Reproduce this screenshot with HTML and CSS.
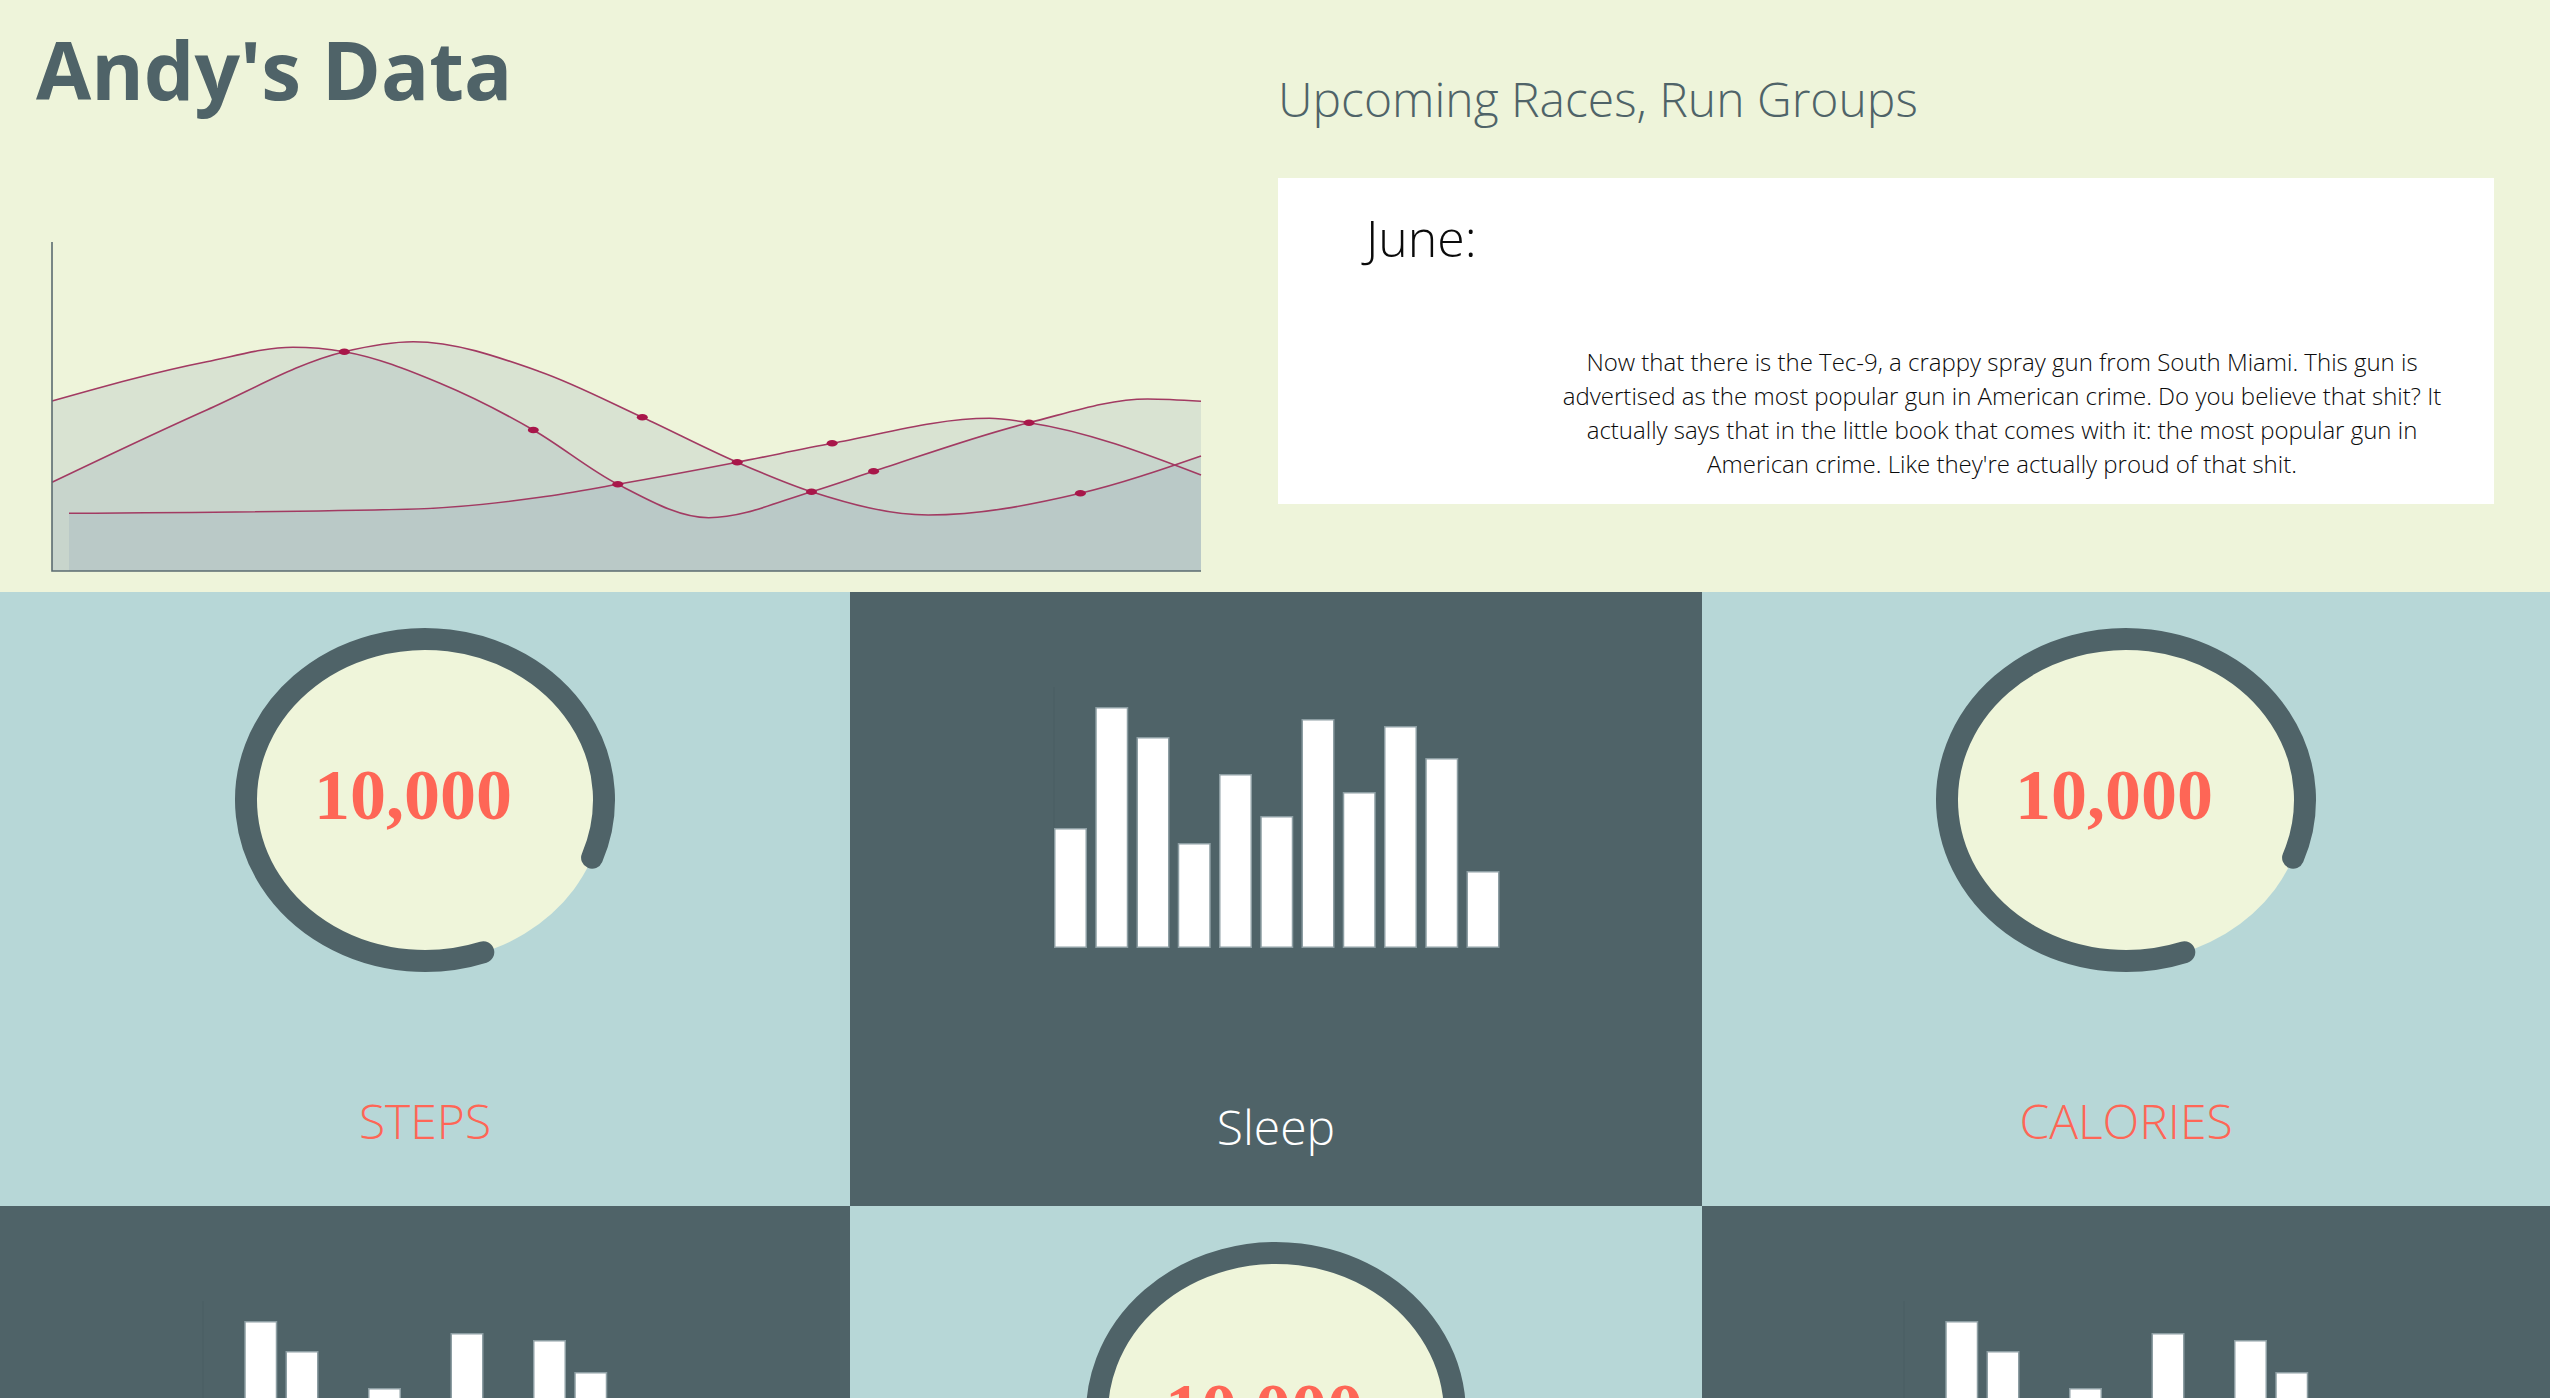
FILE: index.html
```html
<!DOCTYPE html>
<html lang="en">
<head>
  <meta charset="UTF-8" />
  <title>Andy's Data</title>
  <link rel="stylesheet" href="styles.css">
</head>
<body>
  <header id="top">
    <div class="intro">
      <h1>Andy's Data</h1>
      <svg id="trend" width="1180" height="360" viewBox="40 230 1180 360"></svg>
    </div>
    <div class="races">
      <h2>Upcoming Races, Run Groups</h2>
      <div class="month">
        <h3>June:</h3>
        <p>Now that there is the Tec-9, a crappy spray gun from South Miami. This gun is advertised as the most popular gun in American crime. Do you believe that shit? It actually says that in the little book that comes with it: the most popular gun in American crime. Like they're actually proud of that shit.</p>
      </div>
    </div>
  </header>

  <section id="tiles">
    <div class="tile light">
      <svg class="gauge" width="400" height="380" viewBox="0 0 400 380">
        <ellipse class="gauge-face" cx="200" cy="188" rx="179" ry="161" />
        <path class="gauge-arc" d="M258.3 340.2 A179 161 0 1 1 367.1 245.7" />
        <text class="gauge-value" x="188" y="207">10,000</text>
      </svg>
      <div class="label">STEPS</div>
    </div>
    <div class="tile dark">
      <svg class="bars" width="460" height="380" viewBox="0 0 460 380"></svg>
      <div class="label">Sleep</div>
    </div>
    <div class="tile light">
      <svg class="gauge" width="400" height="380" viewBox="0 0 400 380">
        <ellipse class="gauge-face" cx="200" cy="188" rx="179" ry="161" />
        <path class="gauge-arc" d="M258.3 340.2 A179 161 0 1 1 367.1 245.7" />
        <text class="gauge-value" x="188" y="207">10,000</text>
      </svg>
      <div class="label">CALORIES</div>
    </div>

    <div class="tile dark">
      <svg class="bars" width="460" height="380" viewBox="0 0 460 380"></svg>
      <div class="label">Heart Rate</div>
    </div>
    <div class="tile light">
      <svg class="gauge" width="400" height="380" viewBox="0 0 400 380">
        <ellipse class="gauge-face" cx="200" cy="188" rx="179" ry="161" />
        <path class="gauge-arc" d="M258.3 340.2 A179 161 0 1 1 367.1 245.7" />
        <text class="gauge-value" x="188" y="207">10,000</text>
      </svg>
      <div class="label">MILES</div>
    </div>
    <div class="tile dark">
      <svg class="bars" width="460" height="380" viewBox="0 0 460 380"></svg>
      <div class="label">Weight</div>
    </div>
  </section>

  <script>
    const NS = 'http://www.w3.org/2000/svg';

    // three runs, plotted in page pixels (the svg viewBox matches the page)
    const runs = [
      [[52,401],[206.7,361.7],[293,347.3],[344.3,351.7],[440,383.3],[533.3,430],[617.8,484.3],[708.7,517.7],[811.5,491.7],[873.6,471.3],[1029,422.7],[1147.6,399],[1201,401.3]],
      [[52,482.3],[206.7,410],[344.3,351.7],[413.3,341.7],[540,371.7],[642.3,417.3],[737.2,462.3],[811.5,491.7],[928.2,515],[1080.4,493.3],[1201,456]],
      [[69,513.3],[406.7,509.3],[540,497.3],[617.8,484.3],[737.2,462.3],[832.1,443.3],[989.5,418.3],[1029,422.7],[1201,475]]
    ];
    const dots = [[344.3,351.7],[533.3,430],[617.8,484.3],[642.3,417.3],[737.2,462.3],[811.5,491.7],[832.1,443.3],[873.6,471.3],[1029,422.7],[1080.4,493.3]];
    const floor = 571;

    function el(name, attrs, parent) {
      const node = document.createElementNS(NS, name);
      for (const k in attrs) node.setAttribute(k, attrs[k]);
      parent.appendChild(node);
      return node;
    }

    function sign(v) { return v < 0 ? -1 : 1; }

    // monotone-x curve, same idea as d3.curveMonotoneX
    function smooth(pts) {
      const n = pts.length;
      const h = [], s = [], m = [];
      for (let i = 0; i < n - 1; i++) {
        h[i] = pts[i + 1][0] - pts[i][0];
        s[i] = (pts[i + 1][1] - pts[i][1]) / h[i];
      }
      for (let i = 1; i < n - 1; i++) {
        const p = (s[i - 1] * h[i] + s[i] * h[i - 1]) / (h[i - 1] + h[i]);
        m[i] = (sign(s[i - 1]) + sign(s[i])) * Math.min(Math.abs(s[i - 1]), Math.abs(s[i]), 0.5 * Math.abs(p)) || 0;
      }
      m[0] = n > 2 ? (3 * s[0] - m[1]) / 2 : s[0];
      m[n - 1] = n > 2 ? (3 * s[n - 2] - m[n - 2]) / 2 : s[0];
      let d = `M${pts[0][0]},${pts[0][1]}`;
      for (let i = 0; i < n - 1; i++) {
        const t = h[i] / 3;
        d += ` C${pts[i][0] + t},${pts[i][1] + m[i] * t} ${pts[i + 1][0] - t},${pts[i + 1][1] - m[i + 1] * t} ${pts[i + 1][0]},${pts[i + 1][1]}`;
      }
      return d;
    }

    const trend = document.getElementById('trend');
    runs.forEach(pts => {
      const line = smooth(pts);
      const first = pts[0][0], last = pts[pts.length - 1][0];
      el('path', { d: `${line} L${last},${floor} L${first},${floor} Z`, class: 'area' }, trend);
    });
    runs.forEach(pts => el('path', { d: smooth(pts), class: 'line' }, trend));
    dots.forEach(([x, y]) => el('ellipse', { cx: x, cy: y, rx: 5.5, ry: 3.2, class: 'dot' }, trend));
    el('path', { d: `M52,242 V${floor} H1201`, class: 'axis' }, trend);

    // nightly sleep bars
    const sleep = [120, 241, 211, 105, 174, 132, 229, 156, 222, 190, 77];
    document.querySelectorAll('.bars').forEach(svg => {
      el('line', { x1: 8, y1: 75, x2: 8, y2: 336, class: 'bars-axis' }, svg);
      sleep.forEach((v, i) => {
        el('rect', { x: 8.75 + i * 41.25, y: 336.75 - v, width: 31.5, height: v - 1.5, class: 'bar' }, svg);
      });
    });
  </script>
</body>
</html>
```

FILE: styles.css
```css
body {
  margin: 0;
  font-family: 'Open Sans', 'Liberation Sans', sans-serif;
  background: #eef4da;
  color: #4f6368;
}

#top {
  display: grid;
  grid-template-columns: 1278px 1fr;
  height: 592px;
  background: #eef4da;
}

#top h1 {
  margin: 0;
  padding: 14px 0 0 36px;
  font-size: 80px;
  line-height: 109px;
  font-weight: 700;
  color: #4f6368;
}

#trend {
  display: block;
  margin: 107px 0 0 40px;
}

#trend .area {
  fill: rgb(120, 150, 180);
  fill-opacity: 0.18;
}

#trend .line {
  fill: none;
  stroke: #a23a62;
  stroke-width: 1.6;
}

#trend .dot {
  fill: #a8164a;
}

#trend .axis {
  fill: none;
  stroke: #5b6b70;
  stroke-width: 1.6;
}

.races {
  padding: 66px 56px 0 0;
}

.races h2 {
  margin: 0;
  font-size: 48px;
  line-height: 65px;
  font-weight: 300;
  color: #4f6368;
}

.month {
  margin-top: 47px;
  height: 326px;
  box-sizing: border-box;
  padding: 26px 0 0 88px;
  background: #fff;
  color: #0a0a0a;
}

.month h3 {
  margin: 0;
  font-size: 50px;
  line-height: 68px;
  font-weight: 300;
}

.month p {
  margin: 73px 0 0 187px;
  width: 898px;
  font-size: 24px;
  line-height: 34px;
  font-weight: 300;
  text-align: center;
}

#tiles {
  display: grid;
  grid-template-columns: 850px 852px 1fr;
  grid-auto-rows: 614px;
}

.tile {
  display: flex;
  flex-direction: column;
  align-items: center;
  padding-top: 20px;
  box-sizing: border-box;
}

.tile.light {
  background: #b7d7d7;
}

.tile.dark {
  background: #4f6368;
}

.gauge,
.bars {
  display: block;
}

.gauge-face {
  fill: #eff5da;
}

.gauge-arc {
  fill: none;
  stroke: #4f6368;
  stroke-width: 22;
  stroke-linecap: round;
}

.gauge-value {
  font-family: 'Liberation Serif', 'Times New Roman', serif;
  font-weight: 700;
  font-size: 72px;
  fill: #fe6656;
  text-anchor: middle;
}

.bar {
  fill: #fff;
  stroke: #8d9ea3;
  stroke-width: 1.5;
}

.bars-axis {
  stroke: #4b5e63;
  stroke-width: 1;
}

.label {
  margin-top: 96px;
  font-size: 48px;
  line-height: 66px;
  font-weight: 300;
  color: #fe6656;
}

.dark .label {
  margin-top: 102px;
  color: #fff;
}
```
